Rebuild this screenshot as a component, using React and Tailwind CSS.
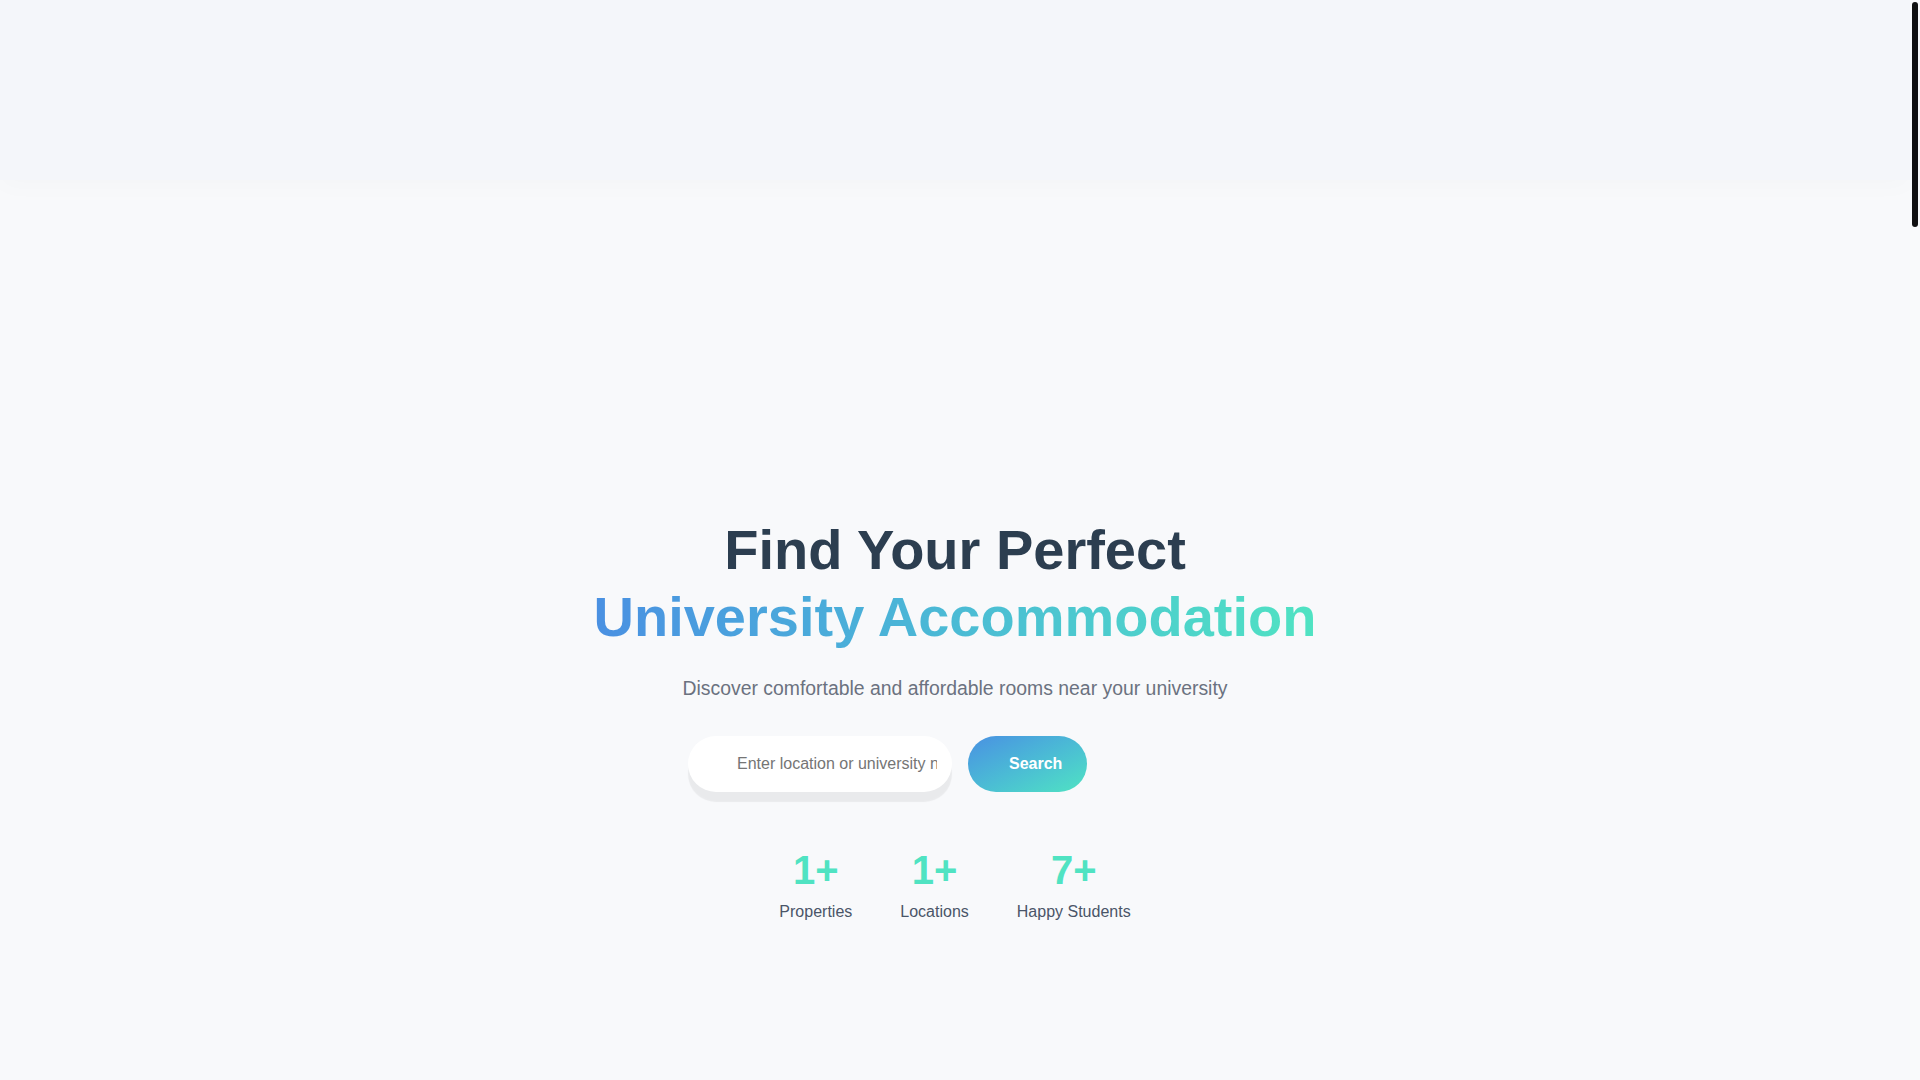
import React, { useState } from 'react';

const stats = [
    { value: '1+', label: 'Properties' },
    { value: '1+', label: 'Locations' },
    { value: '7+', label: 'Happy Students' },
];

const App = () => {
    const [query, setQuery] = useState('');

    const handleSearch = (e) => {
        e.preventDefault();
    };

    return (
        <div className="flex h-screen bg-[#f8f9fb] [font-family:'Liberation_Sans',Arial,sans-serif]">
            <div className="flex-1 overflow-y-scroll [scrollbar-width:none] [&::-webkit-scrollbar]:hidden">
                {/* navbar (content not yet visible) */}
                <header className="h-[180px] bg-[#f4f6fa] shadow-[0_6px_24px_rgba(15,23,42,0.02)]" />

                <section className="pt-[336px] text-center">
                    <h1 className="text-[56px] leading-[1.2] font-bold text-[#2c3e50]">
                        Find Your Perfect
                        <br />
                        <span className="inline-block bg-linear-to-r from-[#4a90e2] to-[#50e3c2] bg-clip-text text-transparent">
                            University Accommodation
                        </span>
                    </h1>

                    <p className="mt-6 text-[19.4px] leading-[1.5] text-[#6b7280]">
                        Discover comfortable and affordable rooms near your university
                    </p>

                    <form onSubmit={handleSearch} className="mx-auto mt-[33px] flex w-[534px] gap-4">
                        <input
                            type="text"
                            value={query}
                            onChange={(e) => setQuery(e.target.value)}
                            placeholder="Enter location or university name"
                            className="h-14 w-[264px] rounded-full bg-white pl-[49px] pr-[15px] text-base text-[#2c3e50] outline-none placeholder-[#757575] shadow-[0_10px_1px_rgba(0,0,0,0.06)]"
                        />
                        <button
                            type="submit"
                            className="h-14 w-[119px] rounded-full bg-linear-to-br from-[#4a90e2] to-[#50e3c2] pl-[41px] pr-[25px] text-left text-base font-bold text-white"
                        >
                            Search
                        </button>
                    </form>

                    <div className="mt-[54px] flex justify-center gap-12">
                        {stats.map((s) => (
                            <div key={s.label} className="flex flex-col items-center">
                                <span className="text-[40px] leading-[1.2] font-bold text-[#50e3c2]">{s.value}</span>
                                <span className="mt-[6px] text-base leading-6 text-[#4a5568]">{s.label}</span>
                            </div>
                        ))}
                    </div>
                </section>

                {/* sections below the fold */}
                <div className="h-[4170px]" />
            </div>

            {/* scrollbar track */}
            <div className="w-[10px] shrink-0 bg-[#f9fafb] pt-[2px]">
                <div className="mx-auto h-[225px] w-[6px] rounded-full bg-[#111111]" />
            </div>
        </div>
    );
};

export default App;
